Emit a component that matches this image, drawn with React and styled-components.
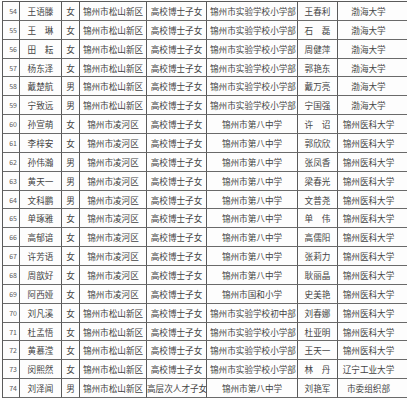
import React from 'react';
import styled, { createGlobalStyle } from 'styled-components';

const GlobalStyle = createGlobalStyle`
  html, body {
    margin: 0;
    padding: 0;
    background: #ffffff;
    overflow: hidden;
  }
`;

// Styled components
const Page = styled.div`
  width: 407px;
  height: 400px;
  overflow: hidden;
  background: #fdfdfd;
  padding: 1px 0 0 2px;
  box-sizing: border-box;
`;

const Table = styled.div`
  display: grid;
  grid-template-columns: 17px 42px 18px 67px 60px 91px 40px 70px;
  grid-auto-rows: 18.86px;
  border-top: 1px solid #5a5a5a;
  border-left: 1px solid #5a5a5a;
  width: max-content;
  font-family: "Noto Sans CJK SC", "Noto Sans", sans-serif;
`;

const Cell = styled.div`
  box-sizing: border-box;
  border-right: 1px solid #5a5a5a;
  border-bottom: 1px solid #6a6a6a;
  display: flex;
  align-items: center;
  justify-content: ${props => props.align || 'center'};
  padding-left: ${props => props.padLeft || 0}px;
  padding-right: ${props => props.padRight || 0}px;
  font-size: ${props => props.small ? '7px' : '8.6px'};
  color: ${props => props.small ? '#5a5a5a' : '#444'};
  white-space: nowrap;
  overflow: hidden;
  letter-spacing: ${props => props.spaced ? '8.6px' : '0'};
  text-indent: ${props => props.spaced ? '8.6px' : '0'};
`;

const rows = [
  [54, '王语滕', '女', '锦州市松山新区', '高校博士子女', '锦州市实验学校小学部', '王春利', '渤海大学'],
  [55, '王琳', '女', '锦州市松山新区', '高校博士子女', '锦州市实验学校小学部', '石磊', '渤海大学'],
  [56, '田耘', '女', '锦州市松山新区', '高校博士子女', '锦州市实验学校小学部', '周健萍', '渤海大学'],
  [57, '杨东泽', '女', '锦州市松山新区', '高校博士子女', '锦州市实验学校小学部', '郭艳东', '渤海大学'],
  [58, '戴楚航', '男', '锦州市松山新区', '高校博士子女', '锦州市实验学校小学部', '戴万亮', '渤海大学'],
  [59, '宁致远', '男', '锦州市松山新区', '高校博士子女', '锦州市实验学校小学部', '宁国强', '渤海大学'],
  [60, '孙宣萌', '女', '锦州市凌河区', '高校博士子女', '锦州市第八中学', '许诏', '锦州医科大学'],
  [61, '李梓安', '女', '锦州市凌河区', '高校博士子女', '锦州市第八中学', '郭欣欣', '锦州医科大学'],
  [62, '孙伟瀚', '男', '锦州市凌河区', '高校博士子女', '锦州市第八中学', '张凤香', '锦州医科大学'],
  [63, '黄天一', '男', '锦州市凌河区', '高校博士子女', '锦州市第八中学', '梁春光', '锦州医科大学'],
  [64, '文科鹏', '男', '锦州市凌河区', '高校博士子女', '锦州市第八中学', '文普尧', '锦州医科大学'],
  [65, '单琢雅', '女', '锦州市凌河区', '高校博士子女', '锦州市第八中学', '单伟', '锦州医科大学'],
  [66, '高郁谙', '女', '锦州市凌河区', '高校博士子女', '锦州市第八中学', '高儒阳', '锦州医科大学'],
  [67, '许芳语', '女', '锦州市凌河区', '高校博士子女', '锦州市第八中学', '张莉力', '锦州医科大学'],
  [68, '周歆好', '女', '锦州市凌河区', '高校博士子女', '锦州市第八中学', '耿丽晶', '锦州医科大学'],
  [69, '阿西娅', '女', '锦州市凌河区', '高校博士子女', '锦州市国和小学', '史美艳', '锦州医科大学'],
  [70, '刘凡溪', '女', '锦州市松山新区', '高校博士子女', '锦州市实验学校初中部', '刘春娜', '锦州医科大学'],
  [71, '杜孟悟', '女', '锦州市松山新区', '高校博士子女', '锦州市实验学校小学部', '杜亚明', '锦州医科大学'],
  [72, '黄慕滢', '女', '锦州市松山新区', '高校博士子女', '锦州市实验学校小学部', '王天一', '锦州医科大学'],
  [73, '闵熙然', '女', '锦州市松山新区', '高校博士子女', '锦州市实验学校小学部', '林丹', '辽宁工业大学'],
  [74, '刘泽闻', '男', '锦州市松山新区', '高层次人才子女', '锦州市第八中学', '刘艳军', '市委组织部'],
];

const App = () => {
  return (
    <Page>
      <GlobalStyle />
      <Table>
        {rows.map(([no, name, sex, district, kind, school, parent, unit]) => {
          const longKind = kind.length > 6;
          const longSchool = school.length > 8;
          return (
            <React.Fragment key={no}>
              <Cell small align="flex-end" padRight={2}>{no}</Cell>
              <Cell spaced={name.length === 2}>{name}</Cell>
              <Cell>{sex}</Cell>
              <Cell>{district}</Cell>
              <Cell align={longKind ? 'flex-start' : 'center'}>{kind}</Cell>
              <Cell align={longSchool ? 'flex-start' : 'center'} padLeft={longSchool ? 3 : 0}>{school}</Cell>
              <Cell spaced={parent.length === 2}>{parent}</Cell>
              <Cell padRight={8}>{unit}</Cell>
            </React.Fragment>
          );
        })}
      </Table>
    </Page>
  );
};

export default App;
